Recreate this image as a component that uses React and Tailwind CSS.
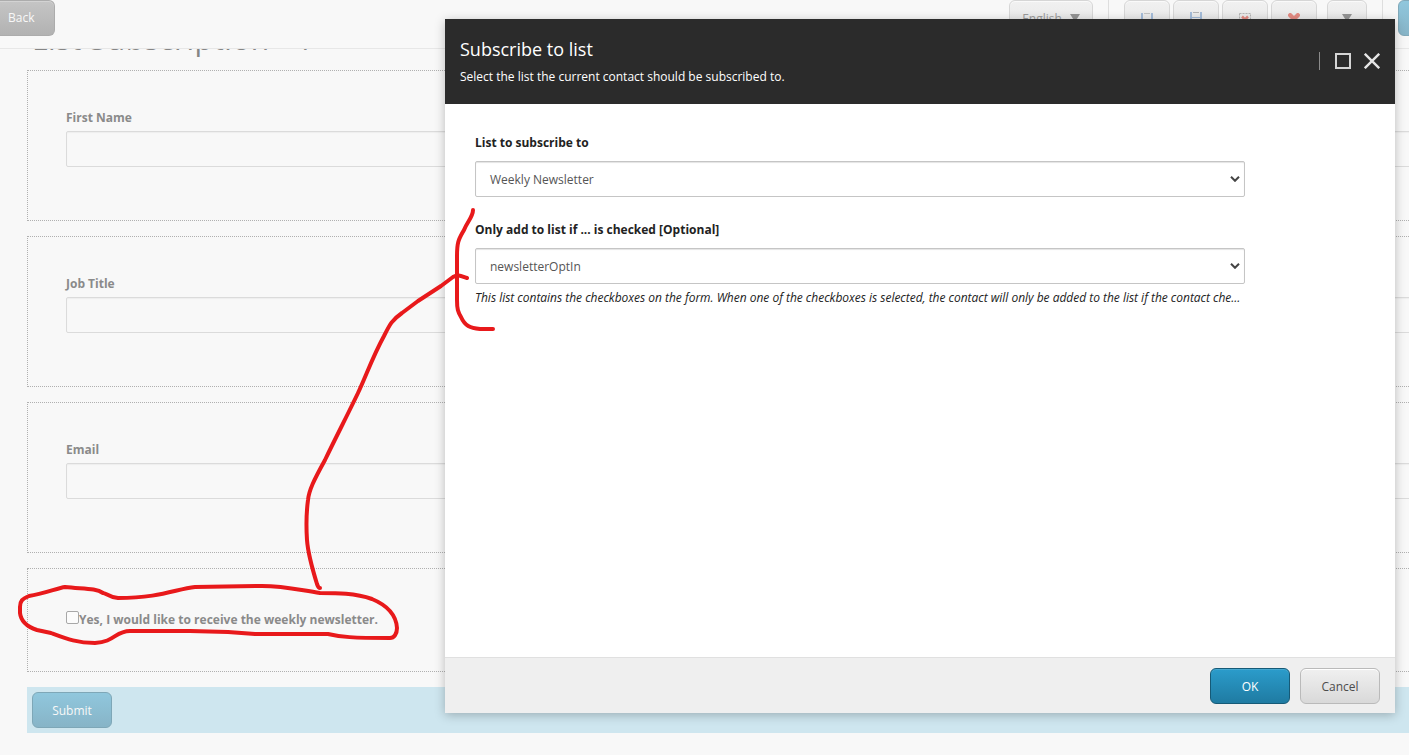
import React from "react";

const FIELDS = ["First Name", "Job Title", "Email"];

function Field({ label }) {
  return (
    <div className="h-[151px] border border-dotted border-[#b0b0b0] px-[38px] pt-[38px]">
      <div className="h-[22px] text-[12px] leading-[18px] font-bold text-[#8a8a8a]">{label}</div>
      <div className="h-9 rounded-[2px] border border-[#dbdbdb] bg-[#f8f8f8] shadow-[inset_0_1px_1px_#eeeeee]" />
    </div>
  );
}

function ToolButton({ width, children }) {
  return (
    <div className={`${width} flex h-9 shrink-0 items-center justify-center rounded-[6px] border border-[#d6d6d6] bg-linear-to-b from-[#f1f1f1] to-[#e4e4e4] shadow-[inset_0_1px_0_#fafafa]`}>
      {children}
    </div>
  );
}

function Triangle() {
  return (
    <svg width="10" height="8" viewBox="0 0 10 8"><path d="M0 0h10L5 8z" fill="#959595" /></svg>
  );
}

function TopBar() {
  return (
    <header className="relative flex h-[49px] items-start border-b border-[#e7e7e7] bg-[#f8f8f8]">
      <div className="flex h-9 w-[55px] shrink-0 items-center rounded-r-[6px] border border-l-0 border-[#acacac] bg-linear-to-b from-[#c5c5c5] to-[#b2b2b2] pl-2 text-[12px] text-[#f8f8f8] shadow-[inset_0_1px_0_#d3d3d3]">
        Back
      </div>
      <div className="ml-[954px] flex shrink-0 items-start">
        <ToolButton width="w-[84px]">
          <span className="mr-[8px] pt-[2px] text-[12px] leading-[18px] text-[#9a9a9a]">English</span>
          <Triangle />
        </ToolButton>
        <div className="mr-[15px] ml-[15px] h-12 w-px bg-[#dedede]" />
        <div className="flex gap-[3px]">
          <ToolButton width="w-[46px]">
            <svg width="12" height="12" viewBox="0 0 12 12" fill="none" className="mb-[-2px]"><path d="M1 0v12M11 0v12" stroke="#a4bcd9" strokeWidth="2" /><path d="M2 11h8" stroke="#a4bcd9" strokeWidth="2" /><path d="M3 .5h6" stroke="#c3c3c3" /></svg>
          </ToolButton>
          <ToolButton width="w-[46px]">
            <svg width="12" height="12" viewBox="0 0 12 12" fill="none"><path d="M1 0v12M11 0v12" stroke="#a4bcd9" strokeWidth="2" /><path d="M2 5.500h8" stroke="#a4bcd9" /><path d="M3 .5h6" stroke="#b5b5b5" /><path d="M4 7v5" stroke="#a4bcd9" strokeWidth="3" /></svg>
          </ToolButton>
          <ToolButton width="w-[46px]">
            <svg width="12" height="12" viewBox="0 0 12 12" fill="none" className="mb-[-2px]"><rect x=".5" y=".5" width="11" height="11" stroke="#b5b5b5" strokeDasharray="2 1" /><path d="M3 3.500l6 6M9 3.500l-6 6" stroke="#e58b83" strokeWidth="2.500" /></svg>
          </ToolButton>
          <ToolButton width="w-[46px]">
            <svg width="12" height="12" viewBox="0 0 12 12" className="mb-[-2px]"><path d="M2.200 2.200l7.600 7.600M9.800 2.200l-7.600 7.600" stroke="#e58b83" strokeWidth="4.400" strokeLinecap="round" /></svg>
          </ToolButton>
        </div>
        <div className="w-[10px]" />
        <ToolButton width="w-10"><Triangle /></ToolButton>
        <div className="mr-[15px] ml-[15px] h-12 w-px bg-[#dedede]" />
        <div className="h-9 w-20 rounded-[6px] border border-[#81a9b9] bg-linear-to-b from-[#90c7dd] to-[#87b4c7]" />
      </div>
    </header>
  );
}

function SelectBox({ value }) {
  return (
    <div className="flex h-9 w-[770px] items-center justify-between rounded-[2px] border border-[#c5c5c5] bg-white pr-[4px] pl-[14px] shadow-[inset_0_1px_1px_#e4e4e4]">
      <span className="pt-[2px] text-[12px] leading-[18px] text-[#555555]">{value}</span>
      <svg width="10" height="6" viewBox="0 0 10 6" fill="none"><path d="M1 .8l4 4 4-4" stroke="#444444" strokeWidth="2" /></svg>
    </div>
  );
}

function Dialog() {
  return (
    <section className="absolute top-[19px] left-[445px] flex h-[694px] w-[950px] flex-col bg-white shadow-[0_2px_10px_rgba(0,0,0,0.25)]">
      <div className="flex h-[85px] shrink-0 items-start justify-between bg-[#2b2b2b] pr-[15px] pl-[15px] text-white">
        <div>
          <h2 className="pt-[18px] text-[18px] leading-[25px]">Subscribe to list</h2>
          <p className="pt-[6px] text-[12px] leading-[17px] font-medium">Select the list the current contact should be subscribed to.</p>
        </div>
        <div className="flex h-[84px] items-center">
          <div className="mr-[15px] h-[18px] w-px bg-[#8b8b8b]" />
          <div className="mr-[13px] h-4 w-4 border-2 border-[#d5d5d5]" />
          <svg width="16" height="16" viewBox="0 0 16 16"><path d="M.8.8l14.400 14.400M15.200.8L.8 15.200" stroke="#e6e6e6" strokeWidth="2.400" /></svg>
        </div>
      </div>
      <div className="grow pt-[30px] pl-[30px] text-[12px] leading-[18px] text-[#222222]">
        <div className="h-[27px] font-bold">List to subscribe to</div>
        <SelectBox value="Weekly Newsletter" />
        <div className="mt-6 h-[27px] font-bold">Only add to list if ... is checked [Optional]</div>
        <SelectBox value="newsletterOptIn" />
        <div className="mt-[5px] w-[770px] tracking-[-0.018px] whitespace-nowrap italic">
          This list contains the checkboxes on the form. When one of the checkboxes is selected, the contact will only be added to the list if the contact che...
        </div>
      </div>
      <div className="flex h-[56px] shrink-0 items-start justify-end gap-[10px] border-t border-[#e0e0e0] bg-[#efefef] pt-[10px] pr-[15px] text-[12px]">
        <button className="h-9 w-20 rounded-[6px] border border-[#165a77] bg-linear-to-b from-[#2b9ccb] to-[#1f7ba2] pt-[2px] font-medium text-white shadow-[inset_0_1px_0_#46a8d0]">OK</button>
        <button className="h-9 w-20 rounded-[6px] border border-[#bababa] bg-linear-to-b from-[#f0f0f0] to-[#d9d9d9] pt-[2px] text-[#4c4c4c] shadow-[inset_0_1px_0_#ffffff]">Cancel</button>
      </div>
    </section>
  );
}

function Annotations() {
  return (
    <svg className="pointer-events-none absolute top-0 left-0" width="1409" height="755" viewBox="0 0 1409 755" fill="none" stroke="#e8191b" strokeWidth="4" strokeLinecap="round" strokeLinejoin="round">
      <path d="M473 210C473 217 467 222 464 230C459 239 457 241 457 256V300C457 309 458 312 461 317C465 326 470 328 480 329H493" />
      <path d="M467 278C461 276 458 274 453 277L441 286L418 301L402 313C392 320 390 324 384 336C373 356 366 376 358 393C346 418 336 437 325 460C314 480 309 490 308 500C306 515 306 525 307 540C308 554 313 571 317 584C318 587 319 588 320 588" />
      <path d="M103 593C96 588 84 589 65 587C58 588 43 594 29 596C22 599 20 601 20 607V613C21 622 28 627 37 630L51 633C67 639 77 643 95 643C115 642 115 631 130 631H190L228 632L255 634H328C341 637 352 638 390 638C394 638 397 634 397 628C396 612 384 604 372 599C355 593 337 593 320 593C299 590 285 586 262 586L195 587C176 589 160 598 118 598C108 597 106 593 103 593" />
    </svg>
  );
}

export default function App() {
  return (
    <div className="relative h-[755px] w-[1409px] overflow-hidden bg-[#f8f8f8] font-['Open_Sans',sans-serif]">
      <TopBar />
      <main className="ml-[27px] w-[1480px]">
        <div className="h-[21px] overflow-hidden">
          <h1 className="mt-[-31px] ml-[5px] text-[30px] leading-[42px] tracking-[0.4px] whitespace-pre text-[#858585]">List Subscription - 1</h1>
        </div>
        <div className="flex flex-col gap-[15px]">
          {FIELDS.map((label) => <Field key={label} label={label} />)}
          <div className="flex h-[104px] items-start border border-dotted border-[#b0b0b0] pt-[42px] pl-[38px]">
            <div className="h-[13px] w-[13px] rounded-[2px] border border-[#a8a8a8] bg-[#fcfcfc]" />
            <span className="text-[12px] leading-[18px] font-bold tracking-[0.01px] text-[#8a8a8a]">Yes, I would like to receive the weekly newsletter.</span>
          </div>
          <div className="h-[46px] bg-[#cee6ef] pt-[5px] pl-[5px]">
            <button className="h-9 w-20 rounded-[6px] border border-[#7ea7b7] bg-linear-to-b from-[#90c7dd] to-[#87b4c7] pt-[2px] text-[12px] text-[#f8f8f8]">Submit</button>
          </div>
        </div>
      </main>
      <Dialog />
      <Annotations />
    </div>
  );
}
